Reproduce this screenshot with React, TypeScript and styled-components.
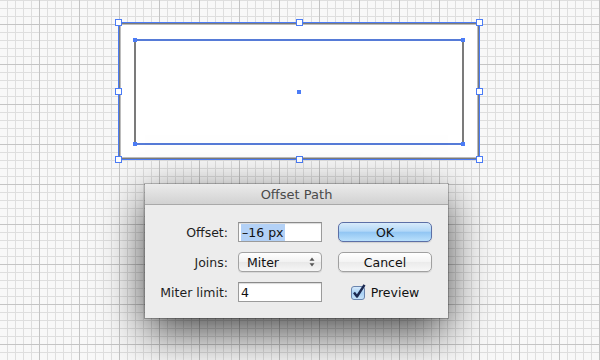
import * as React from "react"
import styled, { createGlobalStyle } from "styled-components"

const GlobalStyle = createGlobalStyle`
  html, body {
    margin: 0;
    padding: 0;
  }
  body {
    font-family: "DejaVu Sans", "Liberation Sans", sans-serif;
  }
`

const BLUE = "#4b7cf6"
const PATH_GRAY = "#7b7b7b"

const Stage = styled.div`
  width: 600px;
  height: 360px;
  overflow: hidden;
  display: flex;
  flex-direction: column;
  background-color: #f8f8f8;
  background-image:
    linear-gradient(to right, #c4c4c4 1px, transparent 1px),
    linear-gradient(to bottom, #c4c4c4 1px, transparent 1px),
    linear-gradient(to right, #dedede 1px, transparent 1px),
    linear-gradient(to bottom, #dedede 1px, transparent 1px);
  background-size: 40px 40px, 40px 40px, 8px 8px, 8px 8px;
  background-position: 39px 24px, 39px 24px, 7px 0, 7px 0;
`

const Artwork = styled.svg`
  display: block;
  flex: none;
`

const Dialog = styled.div`
  margin-left: 145px;
  width: 303px;
  flex: none;
  background: #ececec;
  box-shadow: 0 0 0 1px rgba(0, 0, 0, 0.22), 0 14px 42px rgba(0, 0, 0, 0.72);
`

const TitleBar = styled.div`
  height: 20px;
  display: flex;
  align-items: center;
  justify-content: center;
  background: linear-gradient(to bottom, #ebebeb, #d2d2d2);
  border-bottom: 1px solid #a9a9a9;
  color: #4a4a4a;
  font-size: 13px;
`

const Form = styled.div`
  display: grid;
  grid-template-columns: 83px 84px 100px;
  grid-auto-rows: 20px;
  column-gap: 10px;
  row-gap: 10px;
  padding: 17px 16px 16px 0;
`

const Label = styled.div`
  display: flex;
  align-items: center;
  justify-content: flex-end;
  font-size: 12.5px;
  color: #1e1e1e;
`

const Field = styled.div`
  width: 84px;
  box-sizing: border-box;
  height: 20px;
  background: #fff;
  border: 1px solid #9b9b9b;
  border-top-color: #8a8a8a;
  box-shadow: inset 0 1px 1px rgba(0, 0, 0, 0.15);
  display: flex;
  align-items: center;
  padding-left: 2px;
  font-size: 12.5px;
  color: #111;
`

const Selected = styled.span`
  background: #b3d1f6;
  padding: 1px 2px 1px 1px;
`

const Popup = styled.div`
  width: 84px;
  box-sizing: border-box;
  height: 20px;
  border: 1px solid #a3a3a3;
  border-radius: 4px;
  background: linear-gradient(to bottom, #ffffff, #f1f1f1 50%, #e8e8e8 51%, #f6f6f6);
  box-shadow: 0 1px 0 rgba(0, 0, 0, 0.08);
  display: flex;
  align-items: center;
  justify-content: space-between;
  padding: 0 6px 0 8px;
  font-size: 12.5px;
  color: #111;
`

const Button = styled.div<{ $primary?: boolean }>`
  grid-column: 3;
  margin-left: 6px;
  box-sizing: border-box;
  height: 20px;
  border-radius: 5px;
  display: flex;
  align-items: center;
  justify-content: center;
  font-size: 12.5px;
  color: #111;
  border: 1px solid ${p => (p.$primary ? "#5c6fa6" : "#a0a0a0")};
  background: ${p =>
    p.$primary
      ? "linear-gradient(to bottom, #d8ebfb 0%, #b2d8f8 45%, #92c6f3 52%, #b9e0fc 100%)"
      : "linear-gradient(to bottom, #ffffff 0%, #f4f4f4 48%, #ebebeb 52%, #f7f7f7 100%)"};
  box-shadow: 0 1px 1px rgba(0, 0, 0, 0.12);
`

const CheckRow = styled.label`
  grid-column: 3;
  margin-left: 6px;
  display: flex;
  align-items: center;
  justify-content: center;
  gap: 4px;
  font-size: 12.5px;
  color: #111;
`

const Arrows = () => (
  <svg width="6" height="10" viewBox="0 0 6 10">
    <path d="M3 0.5 L5.5 3.8 H0.5 Z" fill="#555" />
    <path d="M3 9.5 L5.5 6.2 H0.5 Z" fill="#555" />
  </svg>
)

const CheckBox = () => (
  <svg width="16" height="16" viewBox="0 0 16 16">
    <defs>
      <linearGradient id="cb" x1="0" y1="0" x2="0" y2="1">
        <stop offset="0" stopColor="#d9ebfb" />
        <stop offset="0.5" stopColor="#a9d1f5" />
        <stop offset="1" stopColor="#c8e4fb" />
      </linearGradient>
    </defs>
    <rect x="0.5" y="2.5" width="13" height="13" rx="2.5" fill="url(#cb)" stroke="#6a84ad" />
    <path d="M3 8.5 L6 12.5 L13.5 0.8" fill="none" stroke="#1c2a52" strokeWidth="2.4" strokeLinejoin="round" />
  </svg>
)

const handles: [number, number][] = [
  [118, 22], [299, 22], [479, 22],
  [118, 91], [479, 91],
  [118, 159], [299, 159], [479, 159],
]

const corners: [number, number][] = [
  [135, 40], [463, 40], [135, 144], [463, 144],
]

const Shape = () => (
  <Artwork width="600" height="184" viewBox="0 0 600 184">
    <rect x="119.5" y="23.5" width="359" height="135" fill="#fff" stroke={PATH_GRAY} strokeWidth="2" />
    <rect x="118.5" y="22.5" width="361" height="137" fill="none" stroke={BLUE} strokeWidth="1" />
    <rect x="135" y="40" width="328" height="104" fill="none" stroke={PATH_GRAY} strokeWidth="2" />
    <path d="M134 40 H464 M134 144 H464" stroke={BLUE} strokeWidth="1.6" />
    {corners.map(([x, y]) => (
      <rect key={`c${x}-${y}`} x={x - 2} y={y - 2} width="4" height="4" fill={BLUE} />
    ))}
    <rect x="297" y="90" width="4" height="4" fill={BLUE} />
    {handles.map(([x, y]) => (
      <rect key={`h${x}-${y}`} x={x - 2.5} y={y - 2.5} width="6" height="6" fill="#fff" stroke={BLUE} strokeWidth="1" />
    ))}
  </Artwork>
)

const App = () => {
  return (
    <Stage>
      <GlobalStyle />
      <Shape />
      <Dialog>
        <TitleBar>Offset Path</TitleBar>
        <Form>
          <Label>Offset:</Label>
          <Field><Selected>–16 px</Selected></Field>
          <Button $primary>OK</Button>

          <Label>Joins:</Label>
          <Popup>
            <span>Miter</span>
            <Arrows />
          </Popup>
          <Button>Cancel</Button>

          <Label>Miter limit:</Label>
          <Field>4</Field>
          <CheckRow>
            <CheckBox />
            <span>Preview</span>
          </CheckRow>
        </Form>
      </Dialog>
    </Stage>
  )
}

export default App
